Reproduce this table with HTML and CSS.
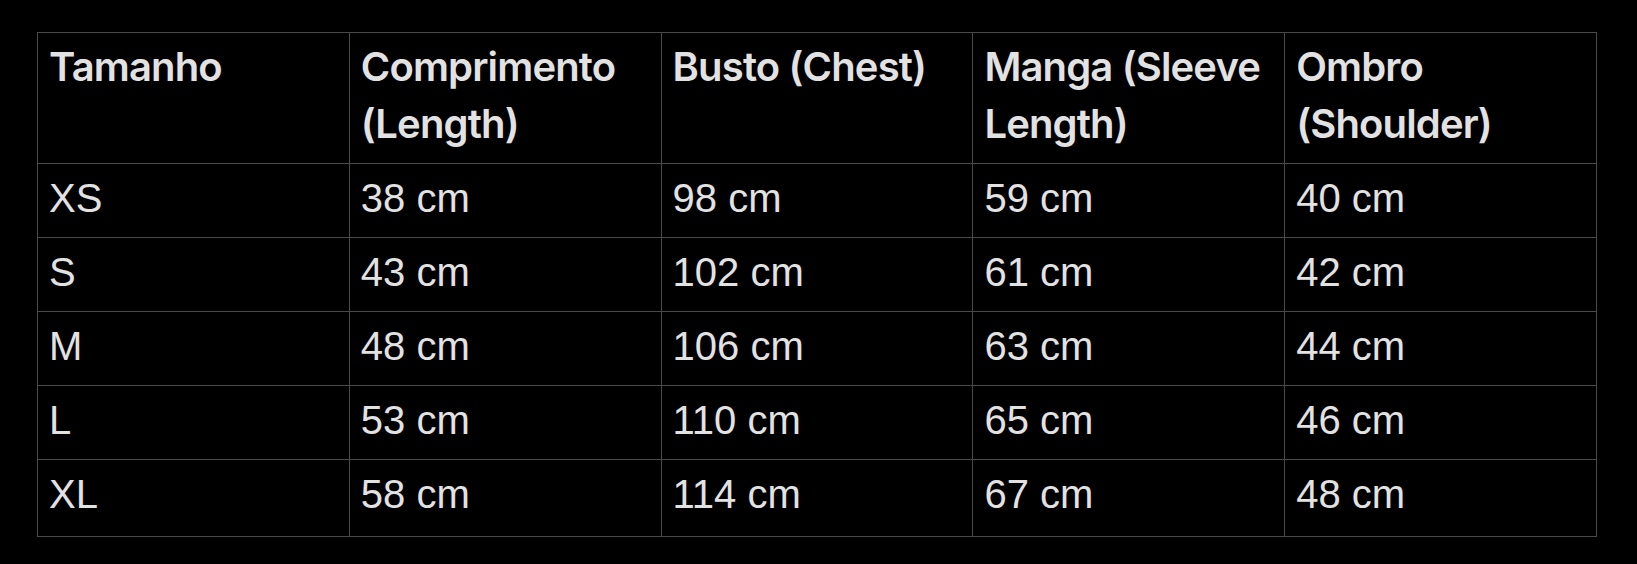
FILE: index.html
```html
<!DOCTYPE html>
<html lang="pt">
<head>
<meta charset="utf-8">
<title>Tabela de tamanhos</title>
<link rel="stylesheet" href="styles.css">
</head>
<body>
<div class="page">
  <table class="size-table">
    <thead>
      <tr>
        <th>Tamanho</th>
        <th>Comprimento (Length)</th>
        <th>Busto (Chest)</th>
        <th>Manga (Sleeve Length)</th>
        <th>Ombro (Shoulder)</th>
      </tr>
    </thead>
    <tbody>
      <tr><td>XS</td><td>38 cm</td><td>98 cm</td><td>59 cm</td><td>40 cm</td></tr>
      <tr><td>S</td><td>43 cm</td><td>102 cm</td><td>61 cm</td><td>42 cm</td></tr>
      <tr><td>M</td><td>48 cm</td><td>106 cm</td><td>63 cm</td><td>44 cm</td></tr>
      <tr><td>L</td><td>53 cm</td><td>110 cm</td><td>65 cm</td><td>46 cm</td></tr>
      <tr class="last"><td>XL</td><td>58 cm</td><td>114 cm</td><td>67 cm</td><td>48 cm</td></tr>
    </tbody>
  </table>
</div>
</body>
</html>
```

FILE: styles.css
```css
html, body {
  margin: 0;
  background: #000;
}
.page {
  padding: 32px 40px 0 37px;
  color: #e2e2e2;
}
.size-table {
  width: 1560px;
  table-layout: fixed;
  border-collapse: collapse;
  font-size: 40px;
  line-height: 57px;
}
.size-table th,
.size-table td {
  border: 1px solid #4a4a4a;
  padding: 5px 11px 11px 11px;
  text-align: left;
  vertical-align: top;
}
.size-table th {
  font-family: Inter, "Noto Sans", sans-serif;
  font-weight: 600;
  letter-spacing: -0.85px;
}
.size-table td {
  font-family: "Liberation Sans", Arial, sans-serif;
  font-weight: 400;
  padding-top: 6px;
  padding-bottom: 10px;
}
.size-table tr.last td {
  padding-bottom: 13px;
}
```
